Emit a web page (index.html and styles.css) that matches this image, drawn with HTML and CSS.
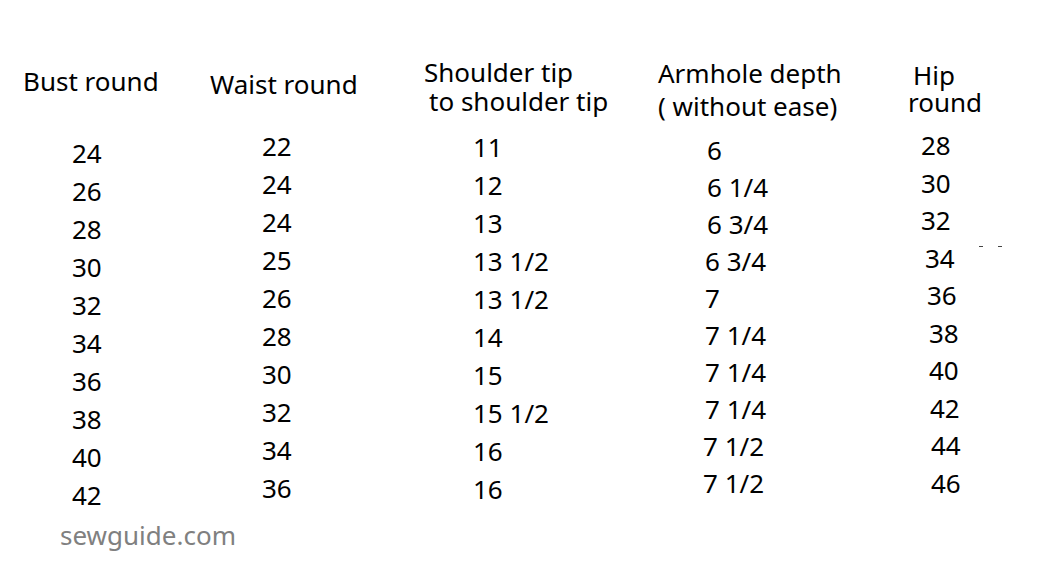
FILE: index.html
```html
<!DOCTYPE html>
<html>
<head>
<meta charset="utf-8">
<link rel="stylesheet" href="styles.css">
</head>
<body>
<div class="sheet">
  <div class="table">
    <div class="col c1">
      <div class="hdr"><div>Bust round</div></div>
      <div class="nums">
        <div>24</div><div>26</div><div>28</div><div>30</div><div>32</div>
        <div>34</div><div>36</div><div>38</div><div>40</div><div>42</div>
      </div>
    </div>
    <div class="col c2">
      <div class="hdr"><div>Waist round</div></div>
      <div class="nums">
        <div>22</div><div>24</div><div>24</div><div>25</div><div>26</div>
        <div>28</div><div>30</div><div>32</div><div>34</div><div>36</div>
      </div>
    </div>
    <div class="col c3">
      <div class="hdr"><div>Shoulder tip</div><div class="in5">to shoulder tip</div></div>
      <div class="nums">
        <div>11</div><div>12</div><div>13</div><div>13 1/2</div><div>13 1/2</div>
        <div>14</div><div>15</div><div>15 1/2</div><div>16</div><div>16</div>
      </div>
    </div>
    <div class="col c4">
      <div class="hdr"><div>Armhole depth</div><div>( without ease)</div></div>
      <div class="nums">
        <div>6</div><div>6 1/4</div><div>6 3/4</div><div class="l2">6 3/4</div><div class="l2">7</div>
        <div class="l2">7 1/4</div><div class="l2">7 1/4</div><div class="l2">7 1/4</div><div class="l4">7 1/2</div><div class="l4">7 1/2</div>
      </div>
    </div>
    <div class="col c5">
      <div class="hdr"><div class="in5">Hip</div><div>round</div></div>
      <div class="nums">
        <div>28</div><div>30</div><div>32</div><div class="r4">34</div><div class="r6">36</div>
        <div class="r8">38</div><div class="r8">40</div><div class="r9">42</div><div class="r10">44</div><div class="r10">46</div>
      </div>
    </div>
    <div class="ticks"><span></span><span></span></div>
  </div>
  <div class="credit">sewguide.com</div>
</div>
</body>
</html>
```

FILE: styles.css
```css
html, body {
  margin: 0;
  padding: 0;
  background: #ffffff;
}
body {
  width: 1044px;
  height: 562px;
  overflow: hidden;
  font-family: "Noto Sans", "Open Sans", sans-serif;
  font-size: 26px;
  color: #000000;
}
.sheet {
  position: relative;
  height: 562px;
}
.table {
  display: flex;
  position: relative;
}
.col {
  display: flex;
  flex-direction: column;
}
.hdr {
  white-space: nowrap;
}
.nums {
  line-height: 38px;
  white-space: nowrap;
}
.c1 { width: 187px; padding-left: 23px; }
.c1 .hdr { margin-top: 63px; line-height: 36px; }
.c1 .nums { margin-top: 35px; padding-left: 49px; }

.c2 { width: 214px; }
.c2 .hdr { margin-top: 66px; line-height: 36px; }
.c2 .nums { margin-top: 25px; padding-left: 52px; }

.c3 { width: 234px; }
.c3 .hdr { margin-top: 58px; line-height: 29px; }
.c3 .nums { margin-top: 12px; padding-left: 49px; }
.in5 { padding-left: 5px; }

.c4 { width: 250px; }
.c4 .hdr { margin-top: 57px; line-height: 33px; }
.c4 .nums { margin-top: 9px; padding-left: 49px; line-height: 37px; }
.l2 { margin-left: -2px; }
.l4 { margin-left: -4px; }

.c5 { width: 120px; }
.c5 .hdr { margin-top: 62px; line-height: 27px; }
.c5 .nums { margin-top: 11px; padding-left: 13px; line-height: 37.5px; }
.r4 { padding-left: 4px; }
.r6 { padding-left: 6px; }
.r8 { padding-left: 8px; }
.r9 { padding-left: 9px; }
.r10 { padding-left: 10px; }

.ticks {
  position: absolute;
  left: 979px;
  top: 246px;
  display: flex;
  gap: 15px;
}
.ticks span {
  display: block;
  width: 4px;
  height: 1px;
  background: #444;
}
.credit {
  position: absolute;
  left: 60px;
  top: 517px;
  color: #808080;
  font-size: 26px;
  line-height: 36px;
}
```
